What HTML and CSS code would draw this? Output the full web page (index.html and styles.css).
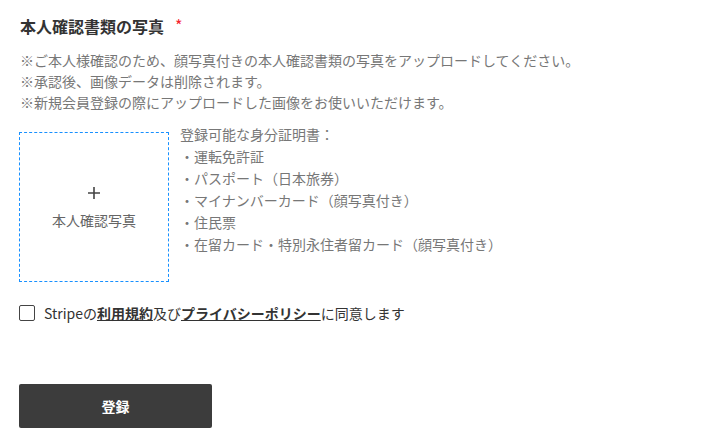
FILE: index.html
```html
<!DOCTYPE html>
<html lang="ja">
<head>
<meta charset="utf-8">
<link rel="stylesheet" href="styles.css">
</head>
<body>
<div class="page">
  <div class="title">本人確認書類の写真<span class="req">*</span></div>
  <div class="notes">
    <p>※ご本人様確認のため、顔写真付きの本人確認書類の写真をアップロードしてください。</p>
    <p>※承認後、画像データは削除されます。</p>
    <p>※新規会員登録の際にアップロードした画像をお使いいただけます。</p>
  </div>
  <div class="upload-row">
    <div class="upload">
      <div class="plus">
        <svg width="14" height="14" viewBox="0 0 14 14"><path d="M7 1v12M1 7h12" stroke="#444" stroke-width="1.6" fill="none"/></svg>
      </div>
      <div class="upload-label">本人確認写真</div>
    </div>
    <div class="docs">
      <p>登録可能な身分証明書：</p>
      <p>・運転免許証</p>
      <p>・パスポート（日本旅券）</p>
      <p>・マイナンバーカード（顔写真付き）</p>
      <p>・住民票</p>
      <p>・在留カード・特別永住者留カード（顔写真付き）</p>
    </div>
  </div>
  <label class="agree">
    <span class="box"></span>
    <span class="agree-text">Stripeの<a class="link">利用規約</a>及び<a class="link">プライバシーポリシー</a>に同意します</span>
  </label>
  <button class="submit">登録</button>
</div>
</body>
</html>
```
FILE: styles.css
```css
* { box-sizing: border-box; }
body {
  margin: 0;
  background: #fff;
  font-family: "Noto Sans CJK JP", "Noto Sans", sans-serif;
  color: #333;
}
p { margin: 0; }
.page {
  padding: 14px 19px 0 19px;
}
.title {
  font-size: 16px;
  font-weight: 700;
  line-height: 24px;
  height: 24px;
  color: #333;
  padding-left: 1px;
}
.req {
  color: #f5222d;
  font-weight: 400;
  font-size: 16px;
  line-height: 1;
  margin-left: 11px;
  position: relative;
  top: -1px;
}
.notes {
  margin-top: 12px;
  font-size: 14px;
  line-height: 21px;
  color: #777;
  padding-left: 1px;
}
.upload-row {
  display: flex;
  align-items: flex-start;
  margin-top: 19px;
}
.upload {
  width: 150px;
  height: 150px;
  border: 1px dashed #1890ff;
  display: flex;
  flex-direction: column;
  align-items: center;
  justify-content: center;
  padding-top: 2px;
}
.plus { height: 14px; margin-bottom: 10px; }
.plus svg { display: block; }
.upload-label {
  font-size: 14px;
  color: #666;
  line-height: 20px;
}
.docs {
  margin-left: 11px;
  margin-top: -9px;
  font-size: 14px;
  line-height: 22px;
  color: #777;
}
.agree {
  display: flex;
  align-items: center;
  margin-top: 20px;
  font-size: 14px;
  line-height: 22px;
  color: #333;
}
.box {
  width: 16px;
  height: 16px;
  border: 1px solid #444;
  border-radius: 2px;
  margin-right: 9px;
  flex: none;
}
.link {
  font-weight: 700;
  color: #333;
  text-decoration: underline;
}
.submit {
  display: block;
  margin-top: 60px;
  width: 193px;
  height: 44px;
  border: none;
  border-radius: 2px;
  background: #3c3c3c;
  color: #fff;
  font-family: "Noto Sans CJK JP", sans-serif;
  font-size: 14px;
  font-weight: 700;
}
```
